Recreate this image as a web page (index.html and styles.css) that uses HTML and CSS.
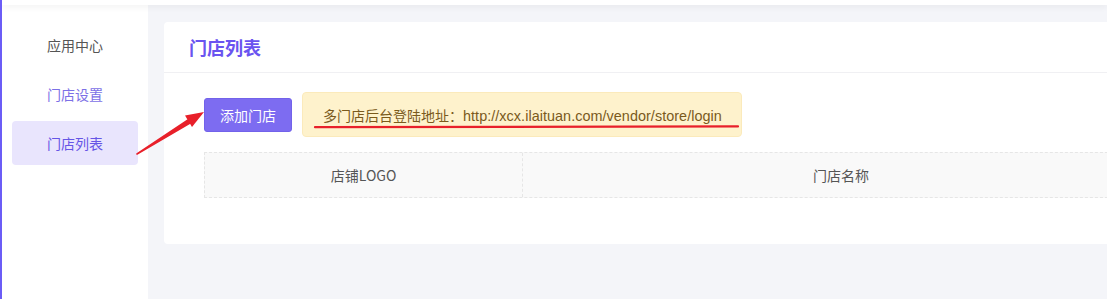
FILE: index.html
```html
<!DOCTYPE html>
<html lang="zh-CN">
<head>
<meta charset="utf-8">
<title>门店列表</title>
<link rel="stylesheet" href="styles.css">
</head>
<body>
<div class="app">
  <div class="topbar"></div>
  <div class="layout">
    <aside class="sidebar">
      <div class="nav-item">应用中心</div>
      <div class="nav-item nav-item--sub">门店设置</div>
      <div class="nav-item nav-item--active">门店列表</div>
    </aside>
    <main class="main">
      <section class="card">
        <header class="card-header">门店列表</header>
        <div class="card-body">
          <div class="toolbar">
            <button class="btn-primary">添加门店</button>
            <div class="notice">多门店后台登陆地址：<span class="latin">http://xcx.ilaituan.com/vendor/store/login</span></div>
          </div>
          <div class="table-wrap">
            <div class="table-head">
              <div class="th">店铺LOGO</div>
              <div class="th">门店名称</div>
            </div>
          </div>
        </div>
      </section>
    </main>
  </div>
  <svg class="annot" width="1107" height="299" viewBox="0 0 1107 299">
    <path d="M137 154 L188 120 L190 123 Z" fill="#e8202a" stroke="#e8202a" stroke-width="1.6" stroke-linejoin="round"/>
    <polygon points="204,112 185,115.5 192,127" fill="#e8202a"/>
    <path d="M315 127.2 L738 126.4" stroke="#e8202a" stroke-width="2.2" stroke-linecap="round"/>
  </svg>
</div>
</body>
</html>
```
FILE: styles.css
```css
html, body {
  margin: 0;
  padding: 0;
  height: 100%;
  overflow: hidden;
}
body {
  font-family: "Liberation Sans", "Noto Sans CJK SC", sans-serif;
  font-size: 14px;
  color: #555;
  background: #f4f5f9;
}
.app {
  position: relative;
  height: 299px;
  border-left: 2px solid #6b5cf6;
  display: flex;
  flex-direction: column;
  overflow: hidden;
}
.topbar {
  position: relative;
  z-index: 2;
  height: 5px;
  background: #fff;
  box-shadow: 0 2px 6px rgba(0, 0, 0, 0.06);
}
.layout {
  flex: 1;
  display: flex;
}
.sidebar {
  width: 146px;
  flex: none;
  background: #fff;
  padding: 18px 10px 0;
  box-sizing: border-box;
  display: flex;
  flex-direction: column;
  gap: 5px;
}
.nav-item {
  height: 44px;
  line-height: 44px;
  padding-left: 35px;
  border-radius: 4px;
  color: #555;
  font-family: "Noto Sans CJK SC", sans-serif;
  font-size: 14px;
}
.nav-item--sub {
  color: #7c70e6;
}
.nav-item--active {
  background: #e9e5fd;
  color: #6655e6;
}
.main {
  flex: 1;
  padding: 17px 0 0 16px;
  min-width: 0;
}
.card {
  height: 222px;
  background: #fff;
  border-radius: 4px 0 0 4px;
  overflow: hidden;
}
.card-header {
  height: 50px;
  line-height: 50px;
  padding-left: 25px;
  border-bottom: 1px solid #f0f0f3;
  font-family: "Noto Sans CJK SC", sans-serif;
  font-size: 18px;
  font-weight: bold;
  color: #6a54f0;
}
.card-body {
  padding: 19px 0 0 40px;
}
.toolbar {
  display: flex;
  align-items: center;
  gap: 10px;
}
.btn-primary {
  height: 34px;
  width: 88px;
  padding: 0;
  border: 1px solid #7262ea;
  border-radius: 3px;
  background: #7d6cf1;
  color: #fff;
  font-family: "Noto Sans CJK SC", sans-serif;
  font-size: 14px;
}
.notice {
  height: 45px;
  width: 440px;
  box-sizing: border-box;
  padding-left: 20px;
  line-height: 45px;
  background: #fef2cc;
  border: 1px solid #fbeabb;
  border-radius: 4px;
  color: #7a5a1c;
  font-family: "Noto Sans CJK SC", sans-serif;
  font-size: 14px;
}
.latin {
  font-family: "Liberation Sans", sans-serif;
  font-size: 14.4px;
  letter-spacing: 0.05px;
}
.table-wrap {
  margin-top: 15px;
  overflow: hidden;
}
.table-head {
  width: 954px;
  height: 46px;
  display: grid;
  grid-template-columns: 318px 636px;
  background: #f9f9f9;
  border-top: 1px dashed #e6e6e6;
  border-bottom: 1px dashed #e6e6e6;
  border-left: 1px dashed #e6e6e6;
  box-sizing: border-box;
}
.th {
  display: flex;
  align-items: center;
  justify-content: center;
  border-right: 1px dashed #e6e6e6;
  font-family: "Noto Sans CJK SC", sans-serif;
  font-size: 14px;
  color: #555;
}
.th:last-child {
  border-right: none;
}
.annot {
  position: absolute;
  left: -2px;
  top: 0;
  pointer-events: none;
}
```
